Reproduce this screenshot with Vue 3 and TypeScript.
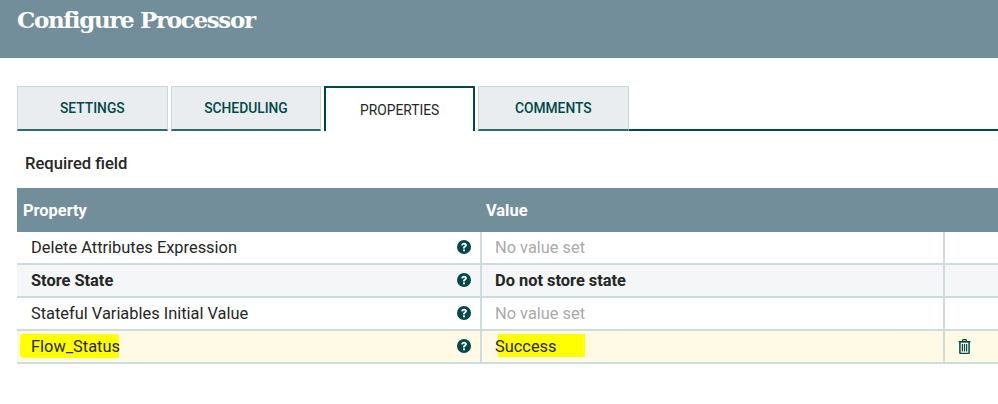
<script setup lang="ts">
interface Row { name: string; value: string; bold?: boolean; empty?: boolean; alt?: boolean; user?: boolean }
const tabs: string[] = ['SETTINGS', 'SCHEDULING', 'PROPERTIES', 'COMMENTS']
const rows: Row[] = [
  { name: 'Delete Attributes Expression', value: 'No value set', empty: true },
  { name: 'Store State', value: 'Do not store state', bold: true, alt: true },
  { name: 'Stateful Variables Initial Value', value: 'No value set', empty: true },
  { name: 'Flow_Status', value: 'Success', user: true },
]
</script>

<template>
  <div class="page">
    <header class="banner"><h1>Configure Processor</h1></header>
    <nav class="tabs">
      <div v-for="t in tabs" :key="t" class="tab" :class="{ active: t === 'PROPERTIES' }">{{ t }}</div>
      <div class="tab-rest"></div>
    </nav>
    <div class="required">Required field</div>
    <section class="table">
      <div class="row head">
        <div class="c1">Property</div>
        <div class="c2">Value</div>
      </div>
      <div v-for="r in rows" :key="r.name" class="row body" :class="{ alt: r.alt, user: r.user, bold: r.bold }">
        <div class="c1">
          <span class="name"><span v-if="r.user" class="hl hl-name"></span><span class="txt">{{ r.name }}</span></span>
          <svg class="help" viewBox="0 0 14 14" width="14" height="14">
            <circle cx="7" cy="7" r="7" fill="#004849" />
            <path d="M4.2 5.3C4.3 3.7 5.5 2.7 7.1 2.7c1.7 0 2.8 1 2.8 2.4 0 1.1-.6 1.7-1.3 2.1-.6.4-.8.6-.8 1.2v.2H6v-.5c0-1 .4-1.5 1.1-1.9.5-.3.8-.6.8-1 0-.5-.4-.8-.9-.8-.6 0-.9.4-1 1z" fill="#fff" />
            <rect x="6" y="9.4" width="1.9" height="1.9" fill="#fff" />
          </svg>
        </div>
        <div class="c2" :class="{ empty: r.empty }">
          <span class="name"><span v-if="r.user" class="hl hl-value"></span><span class="txt">{{ r.value }}</span></span>
        </div>
        <div class="c3">
          <svg v-if="r.user" class="trash" viewBox="0 0 13 15" width="13" height="15">
            <path d="M4.4 2 5 .7h3L8.600 2M.5 2.600h12" fill="none" stroke="#004849" stroke-width="1.3" />
            <path d="M1.900 2.800h9.200v10.800a.8.800 0 0 1-.8.800H2.700a.8.800 0 0 1-.8-.8z" fill="none" stroke="#004849" stroke-width="1.500" />
            <path d="M4.400 5v7.400M6.500 5v7.400M8.600 5v7.400" stroke="#004849" stroke-width="1.200" />
          </svg>
        </div>
      </div>
    </section>
  </div>
</template>

<style>
html, body { margin: 0; background: #fff; }
</style>

<style scoped>
.page {
  width: 998px;
  height: 404px;
  overflow: hidden;
  background: #fff;
  font-family: Roboto, "Liberation Sans", sans-serif;
  color: #262626;
}
.banner {
  height: 58px;
  background: #728e9b;
  padding-left: 17px;
  box-sizing: border-box;
}
.banner h1 {
  margin: 0;
  padding-top: 4px;
  font-family: "DejaVu Serif", serif;
  font-weight: 700;
  font-size: 23px;
  letter-spacing: -1.35px;
  line-height: 32px;
  color: #fff;
}
.tabs {
  display: flex;
  margin-top: 28px;
  margin-left: 17px;
  height: 45px;
}
.tab {
  width: 150.67px;
  margin-right: 3px;
  box-sizing: border-box;
  height: 45px;
  background: #e9edef;
  border: 1px solid #c7d7d8;
  border-bottom: 2px solid #2d6b6c;
  display: flex;
  align-items: center;
  justify-content: center;
  font-size: 13.8px;
  font-weight: 500;
  color: #004849;
}
.tab.active {
  background: #fff;
  border: 2px solid #004849;
  border-bottom: 0;
  color: #262626;
  font-weight: 400;
}
.tab-rest {
  flex: 1;
  margin-left: -3px;
  border-bottom: 2px solid #004849;
}
.required {
  margin: 23px 0 0 25px;
  font-size: 16.6px;
  line-height: 19px;
  font-weight: 500;
  height: 19px;
}
.table { margin: 15px 0 0 17px; }
.row { display: flex; }
.head {
  height: 44px;
  background: #728e9b;
  color: #fff;
  font-weight: 700;
  font-size: 16.4px;
  align-items: center;
}
.head .c1 { width: 463px; padding-left: 6px; box-sizing: border-box; }
.head .c2 { padding-left: 6px; }
.body {
  height: 33px;
  box-sizing: border-box;
  border-bottom: 2px solid #d0dbe0;
  font-size: 16.4px;
  background: #fff;
}
.body.alt { background: #f4f6f7; }
.body.user { background: #fffae6; }
.body.bold { font-weight: 700; color: #262626; }
.body .c1 {
  width: 465px;
  box-sizing: border-box;
  border-right: 2px solid #d0dbe0;
  padding: 0 9px 0 14px;
  display: flex;
  align-items: center;
  justify-content: space-between;
}
.body .c2 {
  width: 463px;
  box-sizing: border-box;
  border-right: 2px solid #d0dbe0;
  padding-left: 13px;
  display: flex;
  align-items: center;
}
.c2.empty { color: #aaa; }
.body .c3 {
  flex: 1;
  display: flex;
  align-items: center;
  padding-left: 13px;
}
.name { position: relative; display: inline-block; }
.txt { position: relative; }
.hl { position: absolute; background: #ffff00; }
.hl-name {
  left: -11px;
  top: -3px;
  width: 99px;
  height: 24px;
  border-radius: 3px 2px 2px 4px;
  transform: rotate(0.4deg);
}
.hl-value {
  left: 3px;
  top: -3px;
  width: 87px;
  height: 23px;
}
.help { flex: none; margin-top: -2px; }
.trash { margin-top: -1px; }
</style>
